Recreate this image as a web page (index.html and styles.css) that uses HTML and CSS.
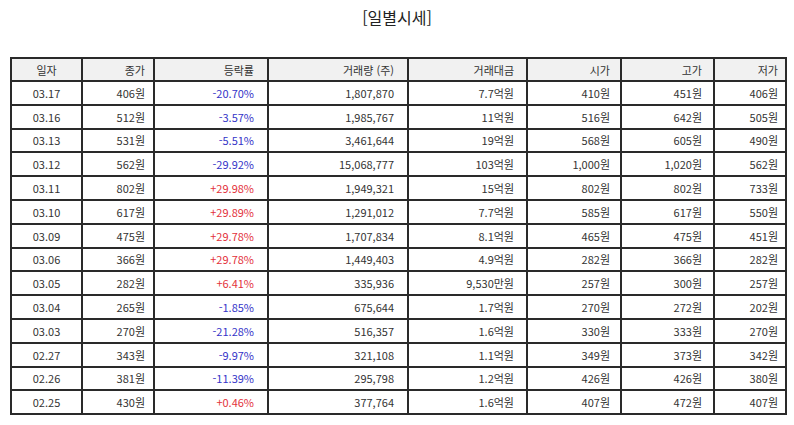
FILE: index.html
```html
<!DOCTYPE html>
<html lang="ko">
<head>
<meta charset="utf-8">
<title>일별시세</title>
<link rel="stylesheet" href="styles.css">
</head>
<body>
<h1 class="title">[일별시세]</h1>
<table class="quotes">
  <colgroup>
    <col class="c1"><col class="c2"><col class="c3"><col class="c4"><col class="c5"><col class="c6"><col class="c7"><col class="c8">
  </colgroup>
  <thead>
    <tr><th class="date">일자</th><th class="close">종가</th><th class="rate">등락률</th><th class="vol">거래량 (주)</th><th class="amt">거래대금</th><th class="open">시가</th><th class="high">고가</th><th class="low">저가</th></tr>
  </thead>
  <tbody>
    <tr><td class="date">03.17</td><td class="close">406원</td><td class="rate down">-20.70%</td><td class="vol">1,807,870</td><td class="amt">7.7억원</td><td class="open">410원</td><td class="high">451원</td><td class="low">406원</td></tr>
    <tr><td class="date">03.16</td><td class="close">512원</td><td class="rate down">-3.57%</td><td class="vol">1,985,767</td><td class="amt">11억원</td><td class="open">516원</td><td class="high">642원</td><td class="low">505원</td></tr>
    <tr><td class="date">03.13</td><td class="close">531원</td><td class="rate down">-5.51%</td><td class="vol">3,461,644</td><td class="amt">19억원</td><td class="open">568원</td><td class="high">605원</td><td class="low">490원</td></tr>
    <tr><td class="date">03.12</td><td class="close">562원</td><td class="rate down">-29.92%</td><td class="vol">15,068,777</td><td class="amt">103억원</td><td class="open">1,000원</td><td class="high">1,020원</td><td class="low">562원</td></tr>
    <tr><td class="date">03.11</td><td class="close">802원</td><td class="rate up">+29.98%</td><td class="vol">1,949,321</td><td class="amt">15억원</td><td class="open">802원</td><td class="high">802원</td><td class="low">733원</td></tr>
    <tr><td class="date">03.10</td><td class="close">617원</td><td class="rate up">+29.89%</td><td class="vol">1,291,012</td><td class="amt">7.7억원</td><td class="open">585원</td><td class="high">617원</td><td class="low">550원</td></tr>
    <tr><td class="date">03.09</td><td class="close">475원</td><td class="rate up">+29.78%</td><td class="vol">1,707,834</td><td class="amt">8.1억원</td><td class="open">465원</td><td class="high">475원</td><td class="low">451원</td></tr>
    <tr><td class="date">03.06</td><td class="close">366원</td><td class="rate up">+29.78%</td><td class="vol">1,449,403</td><td class="amt">4.9억원</td><td class="open">282원</td><td class="high">366원</td><td class="low">282원</td></tr>
    <tr><td class="date">03.05</td><td class="close">282원</td><td class="rate up">+6.41%</td><td class="vol">335,936</td><td class="amt">9,530만원</td><td class="open">257원</td><td class="high">300원</td><td class="low">257원</td></tr>
    <tr><td class="date">03.04</td><td class="close">265원</td><td class="rate down">-1.85%</td><td class="vol">675,644</td><td class="amt">1.7억원</td><td class="open">270원</td><td class="high">272원</td><td class="low">202원</td></tr>
    <tr><td class="date">03.03</td><td class="close">270원</td><td class="rate down">-21.28%</td><td class="vol">516,357</td><td class="amt">1.6억원</td><td class="open">330원</td><td class="high">333원</td><td class="low">270원</td></tr>
    <tr><td class="date">02.27</td><td class="close">343원</td><td class="rate down">-9.97%</td><td class="vol">321,108</td><td class="amt">1.1억원</td><td class="open">349원</td><td class="high">373원</td><td class="low">342원</td></tr>
    <tr><td class="date">02.26</td><td class="close">381원</td><td class="rate down">-11.39%</td><td class="vol">295,798</td><td class="amt">1.2억원</td><td class="open">426원</td><td class="high">426원</td><td class="low">380원</td></tr>
    <tr><td class="date">02.25</td><td class="close">430원</td><td class="rate up">+0.46%</td><td class="vol">377,764</td><td class="amt">1.6억원</td><td class="open">407원</td><td class="high">472원</td><td class="low">407원</td></tr>
  </tbody>
</table>
</body>
</html>
```
FILE: styles.css
```css
html, body {
  margin: 0;
  padding: 0;
  background: #ffffff;
}
body {
  font-family: "Noto Sans CJK KR", "Noto Sans", sans-serif;
  color: #333333;
}
.title {
  margin: 5px 0 0 0;
  height: 24px;
  line-height: 24px;
  font-size: 16px;
  font-weight: normal;
  text-align: center;
  color: #222222;
}
.quotes {
  margin: 28px 0 0 10px;
  width: 776px;
  table-layout: fixed;
  border-collapse: collapse;
  font-size: 11px;
}
.c1 { width: 71px; }
.c2 { width: 72px; }
.c3 { width: 114px; }
.c4 { width: 140px; }
.c5 { width: 119px; }
.c6 { width: 94px; }
.c7 { width: 93px; }
.c8 { width: 72px; }
.quotes th,
.quotes td {
  border: 2px solid #2a2a2a;
  padding: 0 10px 0 0;
  text-align: right;
  font-weight: normal;
  white-space: nowrap;
  line-height: 14px;
}
.quotes th {
  height: 21px;
  background: #f1f1f1;
  color: #333333;
}
.quotes td {
  height: 21.8px;
}
.quotes .date { text-align: center; padding: 0; }
.quotes .close { padding-right: 8px; }
.quotes .rate { padding-right: 13px; }
.quotes .vol { padding-right: 13px; }
.quotes .amt { padding-right: 12px; }
.quotes .open { padding-right: 10px; }
.quotes .high { padding-right: 11px; }
.quotes .low { padding-right: 7px; }
.quotes .down { color: #3434c8; }
.quotes .up { color: #e3323b; }
```
